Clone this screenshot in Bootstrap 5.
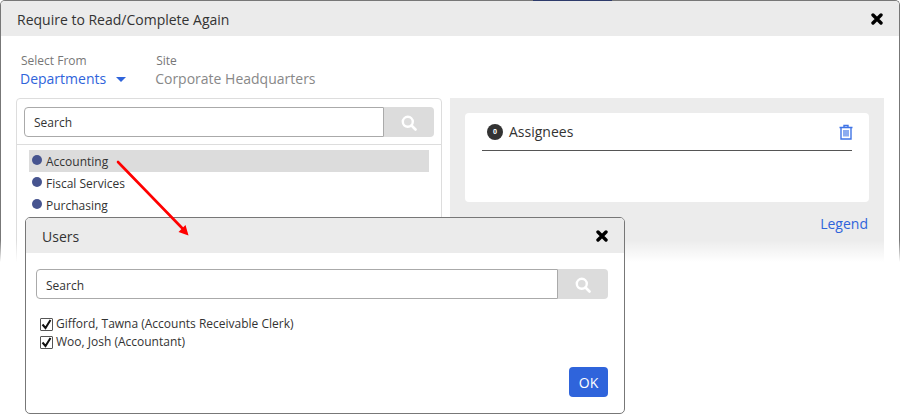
<!doctype html>
<html lang="en">
<head>
<meta charset="utf-8">
<link href="https://cdn.jsdelivr.net/npm/bootstrap@5.3.0/dist/css/bootstrap.min.css" rel="stylesheet">
<style>
html,body{height:414px;overflow:hidden;background:#fff}
body{font-family:"Open Sans",sans-serif;font-size:12px;color:#333;position:relative}
.outer-win{height:290px;border:1px solid #777;border-bottom:0;border-radius:5px 5px 0 0;overflow:hidden;position:relative}
.top-sliver{position:absolute;left:533px;top:0;width:79px;height:1px;background:#2d3b6b}
.win-head{height:35px;background:#ebebeb;padding:0 16px;font-size:14px;line-height:38px}
.x-btn{font-size:0;line-height:0;background:none;border:0;padding:0}
.x-btn svg{display:block}
.outer-body{padding:0 15px}
.from-row{gap:29px;padding:16px 4px 0;height:62px}
.from-label{font-size:12px;color:#777;line-height:17px;padding-left:1px}
.from-val{font-size:14px;line-height:19px;color:#2f64db}
.from-site{color:#888}
.caret-down{display:inline-block;border:5px solid transparent;border-top-color:#2f64db;border-bottom:0;vertical-align:2px;margin-left:10px}
.two-col{gap:8px;width:868px}
.dept-panel{width:426px;height:170px;border:1px solid #ddd;border-radius:4px}
.search-wrap{padding:8px 7px 7px;border-bottom:1px solid #ddd}
.srch{height:30px}
.srch .form-control{height:30px;border:1px solid #aaa;border-radius:4px 0 0 4px;font-size:12px;line-height:18px;color:#333;padding:2px 9px 0;font-family:inherit;box-shadow:none;min-height:0}
.search-wrap .srch .form-control{padding-top:0}
.srch .form-control::placeholder{color:#333;opacity:1}
.srch-btn{width:50px;background:#dcdcdc;border-radius:0 4px 4px 0;border:0;padding:0}
.dept-list{padding:5px 12px 0}
.dept-item{height:22px;line-height:20px;padding:2px 0 0 3px;gap:4px}
.dept-item.is-on{background:#dcdcdc}
.dot{width:10px;height:10px;border-radius:50%;background:#46548f;flex:none;margin-top:-4px}
.assign-panel{width:434px;height:170px;background:#ececec;padding:15px 15px 0}
.assign-card{height:89px;background:#fff;border-radius:4px;padding:0 17px}
.assign-head{height:38px;border-bottom:1px solid #555;gap:6px;font-size:14px;padding-left:5px}
.count-pill{width:16px;height:16px;border-radius:50%;background:#333;color:#fff;font-size:7px;font-weight:700;line-height:16px;text-align:center}
.trash-ico{margin-right:-1px}
.legend-link{font-size:14px;color:#2f64db;text-decoration:none;line-height:19px;padding:12px 1px 0 0}
.fade-out{position:absolute;left:0;right:0;top:240px;height:174px;background:linear-gradient(rgba(255,255,255,0),#fff 22px)}
.users-win{position:absolute;left:25px;top:217px;width:600px;height:197px;background:#fff;border:1px solid #777;border-radius:5px}
.users-head{height:35px;background:#ebebeb;border-radius:4px 4px 0 0;padding:0 16px;font-size:14px;line-height:38px}
.users-body{padding:16px 16px 0 10px}
.users-list{padding:16px 0 0 4px;height:68px}
.check-row{height:18px;line-height:18px;gap:3px}
.check-row .form-check-input{width:13px;height:13px;margin:0;border:1px solid #555;border-radius:1px;background-color:#fff;opacity:1;flex:none;background-image:url("data:image/svg+xml,%3csvg xmlns='http://www.w3.org/2000/svg' viewBox='0 0 13 13'%3e%3cpath fill='none' stroke='%23111' stroke-width='2' d='M2.500 6.500l3 3.500 5-8'/%3e%3c/svg%3e");background-size:13px}
.ok-btn{width:39px;height:30px;padding:0;background:#2f64db;border:0;font-size:14px;color:#fff;border-radius:4px}
.arrow-layer{position:absolute;left:0;top:0;pointer-events:none}
</style>
</head>
<body>
<div class="outer-win">
  <div class="win-head d-flex justify-content-between">
    <span>Require to Read/Complete Again</span>
    <button class="x-btn align-self-center" aria-label="Close"><svg width="12" height="12" viewBox="0 0 12 12"><path d="M2 2l8 8M10 2l-8 8" stroke="#000" stroke-width="3.400" stroke-linecap="round"/></svg></button>
  </div>
  <div class="outer-body">
    <div class="d-flex from-row">
      <div>
        <div class="from-label">Select From</div>
        <div class="from-val">Departments<span class="caret-down"></span></div>
      </div>
      <div>
        <div class="from-label">Site</div>
        <div class="from-val from-site">Corporate Headquarters</div>
      </div>
    </div>
    <div class="d-flex two-col">
      <div class="dept-panel flex-shrink-0">
        <div class="search-wrap">
          <div class="d-flex srch">
            <input class="form-control" placeholder="Search">
            <button class="srch-btn flex-shrink-0" aria-label="Search"><svg width="16" height="16" viewBox="0 0 16 16"><circle cx="6.800" cy="6.800" r="5" fill="none" stroke="#fff" stroke-width="2.400"/><path d="M10.500 10.500l4 4" stroke="#fff" stroke-width="2.600" stroke-linecap="round"/></svg></button>
          </div>
        </div>
        <div class="dept-list">
          <div class="d-flex align-items-center dept-item is-on"><span class="dot"></span>Accounting</div>
          <div class="d-flex align-items-center dept-item"><span class="dot"></span>Fiscal Services</div>
          <div class="d-flex align-items-center dept-item"><span class="dot"></span>Purchasing</div>
        </div>
      </div>
      <div class="assign-panel flex-shrink-0 d-flex flex-column">
        <div class="assign-card">
          <div class="d-flex align-items-center assign-head">
            <span class="count-pill">0</span><span class="flex-grow-1">Assignees</span>
            <svg class="trash-ico" width="14" height="16" viewBox="0 0 14 16"><path d="M.5 3.500h13M5 3.500V1.500h4v2M2 3.500v11.500h10V3.500" fill="none" stroke="#3f74e6" stroke-width="1.400"/><path d="M5 6v6.500M7 6v6.500M9 6v6.500" stroke="#3f74e6" stroke-width="1.200"/></svg>
          </div>
        </div>
        <a class="legend-link text-end" href="#">Legend</a>
      </div>
    </div>
  </div>
</div>
<span class="top-sliver"></span>
<div class="fade-out"></div>
<div class="users-win">
  <div class="users-head d-flex justify-content-between">
    <span>Users</span>
    <button class="x-btn align-self-center" aria-label="Close"><svg width="12" height="12" viewBox="0 0 12 12"><path d="M2 2l8 8M10 2l-8 8" stroke="#000" stroke-width="3.400" stroke-linecap="round"/></svg></button>
  </div>
  <div class="users-body">
    <div class="d-flex srch">
      <input class="form-control" placeholder="Search">
      <button class="srch-btn flex-shrink-0" aria-label="Search"><svg width="16" height="16" viewBox="0 0 16 16"><circle cx="6.800" cy="6.800" r="5" fill="none" stroke="#fff" stroke-width="2.400"/><path d="M10.500 10.500l4 4" stroke="#fff" stroke-width="2.600" stroke-linecap="round"/></svg></button>
    </div>
    <div class="users-list">
      <div class="d-flex align-items-center check-row"><input class="form-check-input" type="checkbox" checked><span>Gifford, Tawna (Accounts Receivable Clerk)</span></div>
      <div class="d-flex align-items-center check-row"><input class="form-check-input" type="checkbox" checked><span>Woo, Josh (Accountant)</span></div>
    </div>
    <div class="text-end"><button class="btn ok-btn">OK</button></div>
  </div>
</div>
<svg class="arrow-layer" width="900" height="414"><path d="M118 162L183 229" stroke="#f00" stroke-width="2.600" stroke-linecap="round"/><path d="M188.500 235.500l-10-3.500 7-7z" fill="#f00"/></svg>
<script src="https://cdn.jsdelivr.net/npm/bootstrap@5.3.0/dist/js/bootstrap.bundle.min.js"></script>
</body>
</html>
